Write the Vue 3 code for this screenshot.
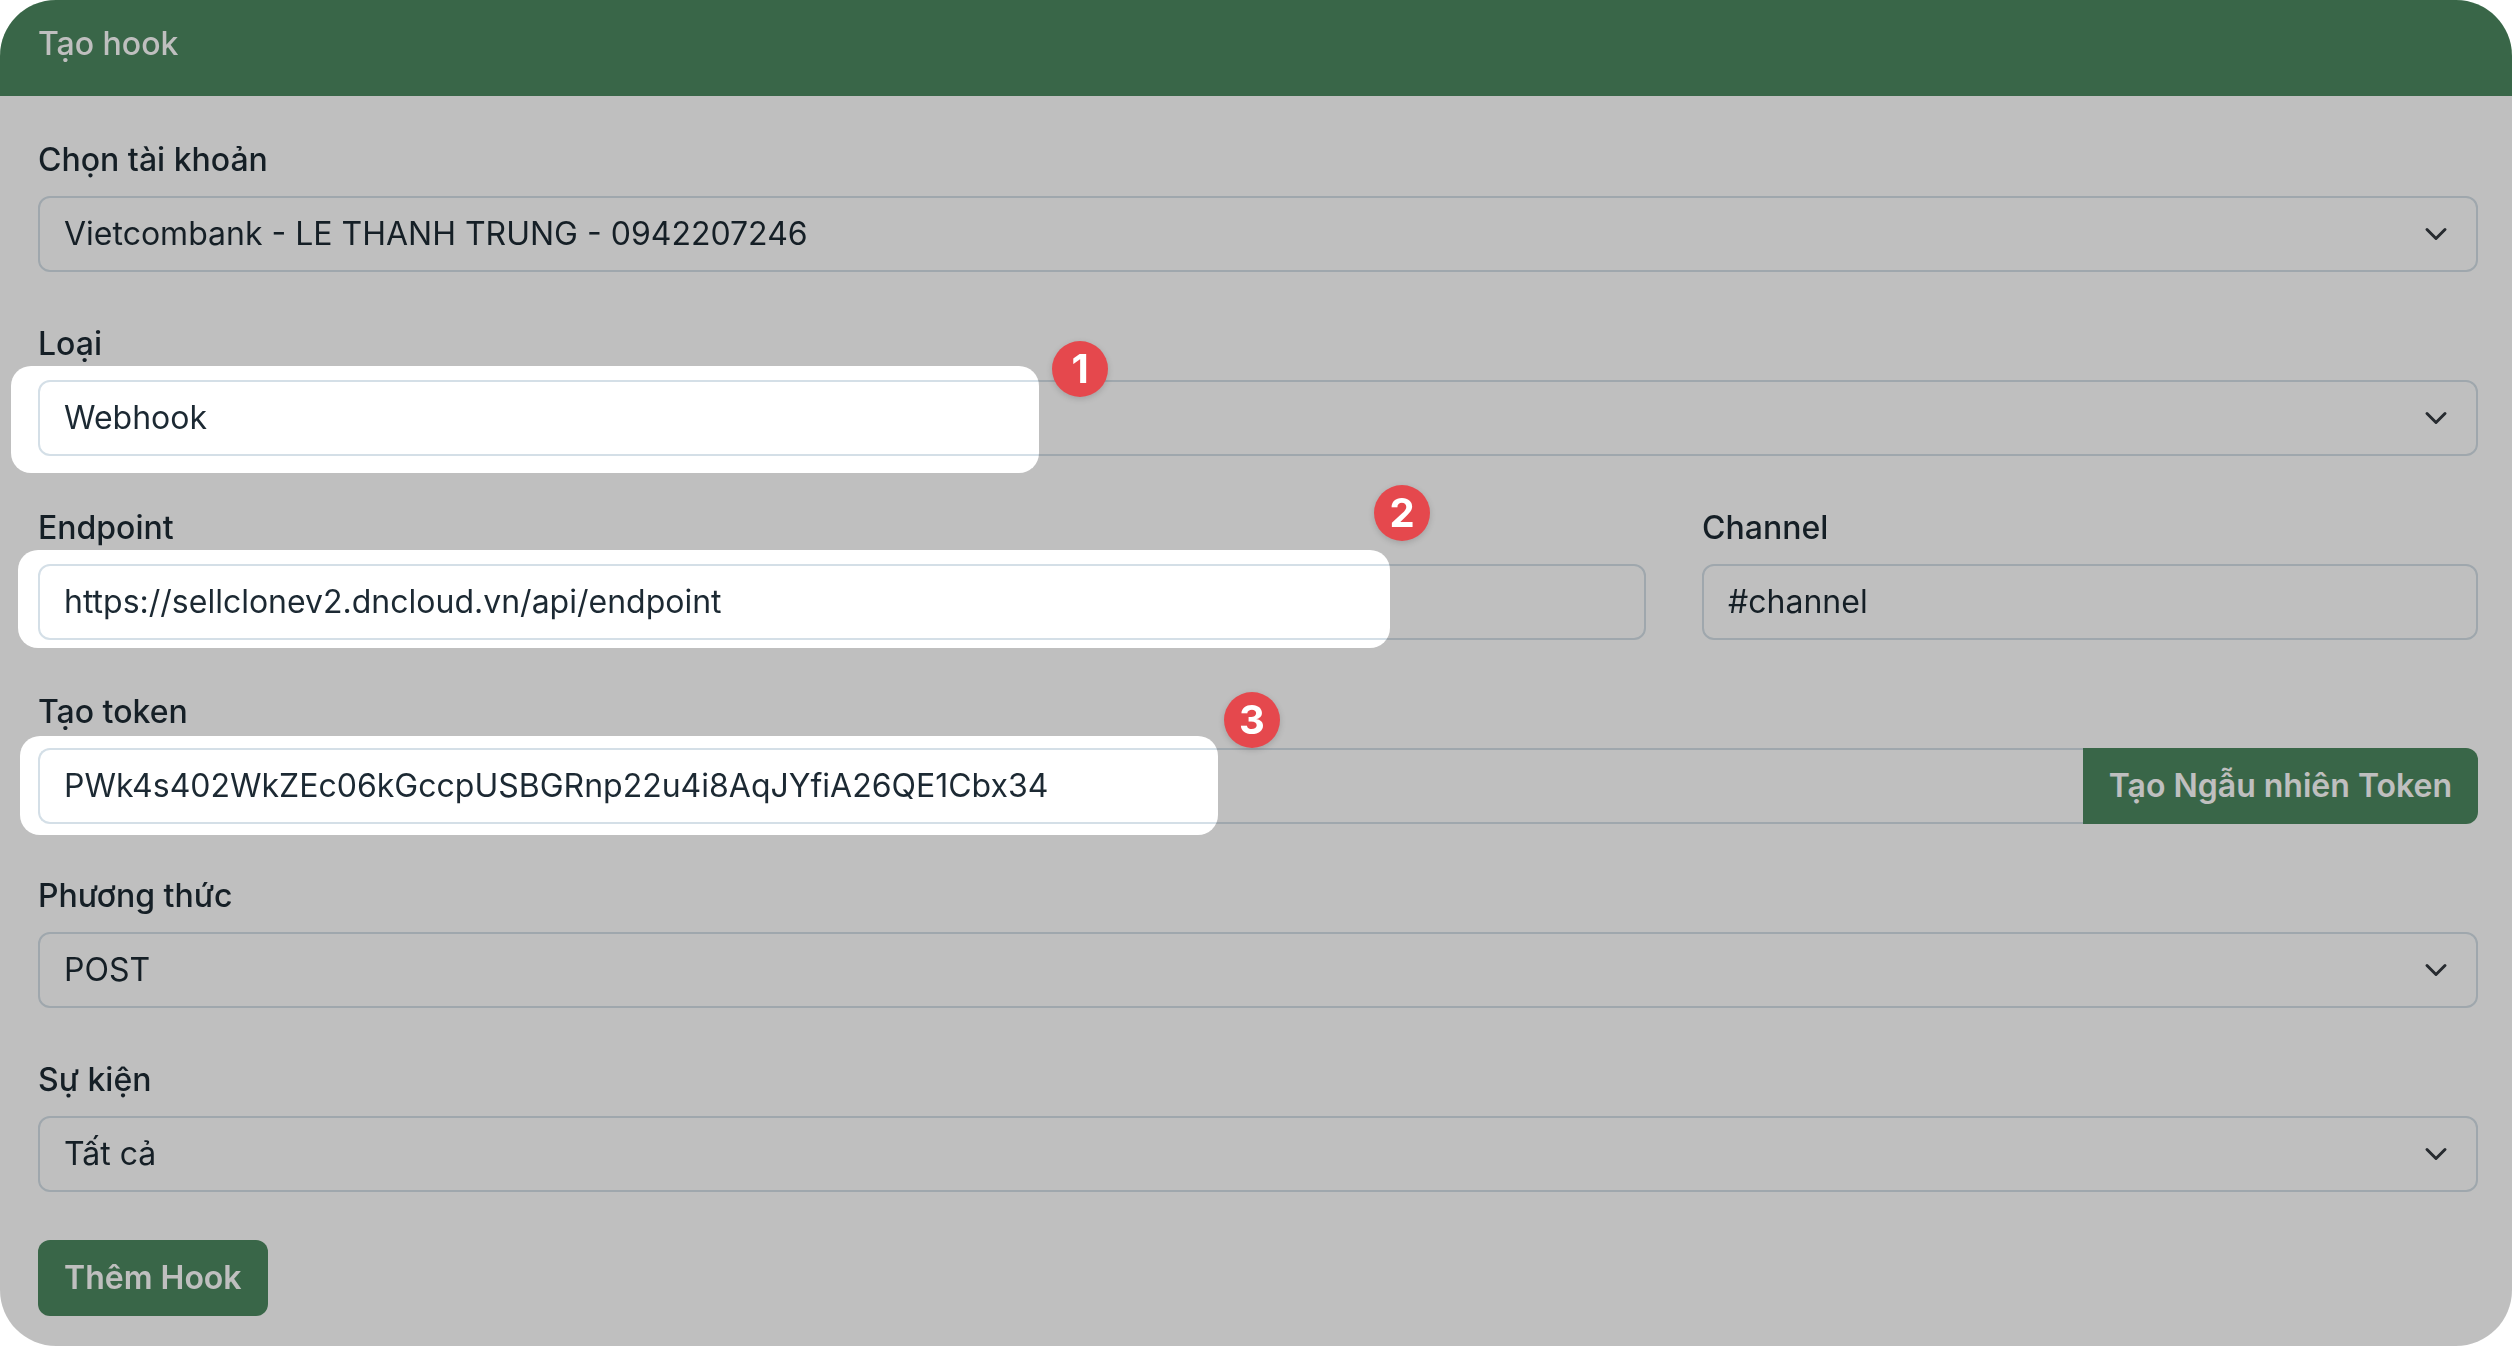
<script setup>
import { ref } from 'vue'

const account = ref('vcb')
const type = ref('webhook')
const endpoint = ref('https://sellclonev2.dncloud.vn/api/endpoint')
const channel = ref('#channel')
const token = ref('PWk4s402WkZEc06kGccpUSBGRnp22u4i8AqJYfiA26QE1Cbx34')
const method = ref('post')
const event = ref('all')
</script>

<template>
  <main class="card">
    <header class="card-header">
      <h1>Tạo hook</h1>
    </header>

    <form class="card-body" @submit.prevent>
      <div class="field">
        <label for="account">Chọn tài khoản</label>
        <div class="control">
          <select id="account" v-model="account">
            <option value="vcb">Vietcombank - LE THANH TRUNG - 0942207246</option>
          </select>
          <svg class="chevron" viewBox="0 0 16 16" aria-hidden="true"><path d="m2 5 6 6 6-6" /></svg>
        </div>
      </div>

      <div class="field">
        <label for="type">Loại</label>
        <div class="control">
          <select id="type" v-model="type">
            <option value="webhook">Webhook</option>
          </select>
          <svg class="chevron" viewBox="0 0 16 16" aria-hidden="true"><path d="m2 5 6 6 6-6" /></svg>
          <span class="spotlight spotlight-type"></span>
          <span class="step step-type">1</span>
        </div>
      </div>

      <div class="row">
        <div class="field wide">
          <label for="endpoint">Endpoint</label>
          <div class="control">
            <input id="endpoint" v-model="endpoint" type="text" />
            <span class="spotlight spotlight-endpoint"></span>
            <span class="step step-endpoint">2</span>
          </div>
        </div>
        <div class="field narrow">
          <label for="channel">Channel</label>
          <div class="control">
            <input id="channel" v-model="channel" type="text" />
          </div>
        </div>
      </div>

      <div class="field">
        <label for="token">Tạo token</label>
        <div class="control group">
          <input id="token" v-model="token" type="text" spellcheck="false" />
          <button class="btn" type="button">Tạo Ngẫu nhiên Token</button>
          <span class="spotlight spotlight-token"></span>
          <span class="step step-token">3</span>
        </div>
      </div>

      <div class="field">
        <label for="method">Phương thức</label>
        <div class="control">
          <select id="method" v-model="method">
            <option value="post">POST</option>
          </select>
          <svg class="chevron" viewBox="0 0 16 16" aria-hidden="true"><path d="m2 5 6 6 6-6" /></svg>
        </div>
      </div>

      <div class="field">
        <label for="event">Sự kiện</label>
        <div class="control">
          <select id="event" v-model="event">
            <option value="all">Tất cả</option>
          </select>
          <svg class="chevron" viewBox="0 0 16 16" aria-hidden="true"><path d="m2 5 6 6 6-6" /></svg>
        </div>
      </div>

      <button class="btn submit" type="submit">Thêm Hook</button>
    </form>
  </main>
</template>

<style>
body {
  background: #fff;
}
</style>

<style scoped>
.card {
  position: relative;
  isolation: isolate;
  overflow: hidden;
  border-radius: 56px;
  background: #fff;
  color: #1d2a33;
  font-family: Inter, "Noto Sans", sans-serif;
  font-size: 32px;
  line-height: 48px;
}

/* Dims everything except the spotlights and step markers above it */
.card::after {
  content: "";
  position: absolute;
  inset: 0;
  z-index: 1;
  background: rgba(0, 0, 0, 0.25);
  pointer-events: none;
}

.card-header {
  padding: 20px 38px 28px;
  background: #4d8960;
  color: #fff;
}

h1 {
  margin: 0;
  font-size: 32px;
  font-weight: 500;
  line-height: 48px;
}

.card-body {
  display: flex;
  flex-direction: column;
  gap: 48px;
  padding: 40px 34px 30px 38px;
}

.row {
  display: grid;
  grid-template-columns: repeat(12, 1fr);
  column-gap: 56px;
}

.wide {
  grid-column: span 8;
}

.narrow {
  grid-column: span 4;
}

.field {
  display: flex;
  flex-direction: column;
  gap: 12px;
  min-width: 0;
}

label {
  font-weight: 500;
}

.control {
  position: relative;
  display: flex;
}

input,
select {
  flex: 1;
  min-width: 0;
  height: 76px;
  box-sizing: border-box;
  margin: 0;
  padding: 0 24px;
  border: 2px solid #d4dfe7;
  border-radius: 12px;
  outline: none;
  appearance: none;
  background: #fff;
  color: inherit;
  font: inherit;
}

input {
  padding-bottom: 2px;
}

.chevron {
  position: absolute;
  top: 26px;
  right: 30px;
  width: 24px;
  height: 24px;
  fill: none;
  stroke: #343a40;
  stroke-width: 2;
  stroke-linecap: round;
  stroke-linejoin: round;
  pointer-events: none;
}

.btn {
  height: 76px;
  margin: 0;
  padding: 0 26px;
  border: 0;
  border-radius: 12px;
  background: #4d8960;
  color: #fff;
  font: inherit;
  font-weight: 600;
  white-space: nowrap;
}

.submit {
  align-self: flex-start;
}

.group input {
  border-right: 0;
  border-radius: 12px 0 0 12px;
}

.group .btn {
  border-radius: 0 12px 12px 0;
}

/* Color-dodge with #404040 cancels the 25% dimming exactly */
.spotlight {
  position: absolute;
  z-index: 2;
  border-radius: 20px;
  background: #404040;
  mix-blend-mode: color-dodge;
  pointer-events: none;
}

.spotlight-type {
  top: -14px;
  left: -27px;
  width: 1028px;
  height: 107px;
}

.spotlight-endpoint {
  top: -14px;
  left: -20px;
  width: 1372px;
  height: 98px;
}

.spotlight-token {
  top: -12px;
  left: -18px;
  width: 1198px;
  height: 99px;
}

.step {
  position: absolute;
  z-index: 3;
  display: grid;
  place-items: center;
  width: 56px;
  height: 56px;
  border-radius: 50%;
  background: #e5484d;
  box-shadow: 0 2px 6px rgba(0, 0, 0, 0.16);
  color: #fff;
  font-size: 40px;
  font-weight: 700;
  line-height: 56px;
}

.step-type {
  top: -39px;
  left: 1014px;
}

.step-endpoint {
  top: -79px;
  left: 1336px;
}

.step-token {
  top: -56px;
  left: 1186px;
}
</style>
